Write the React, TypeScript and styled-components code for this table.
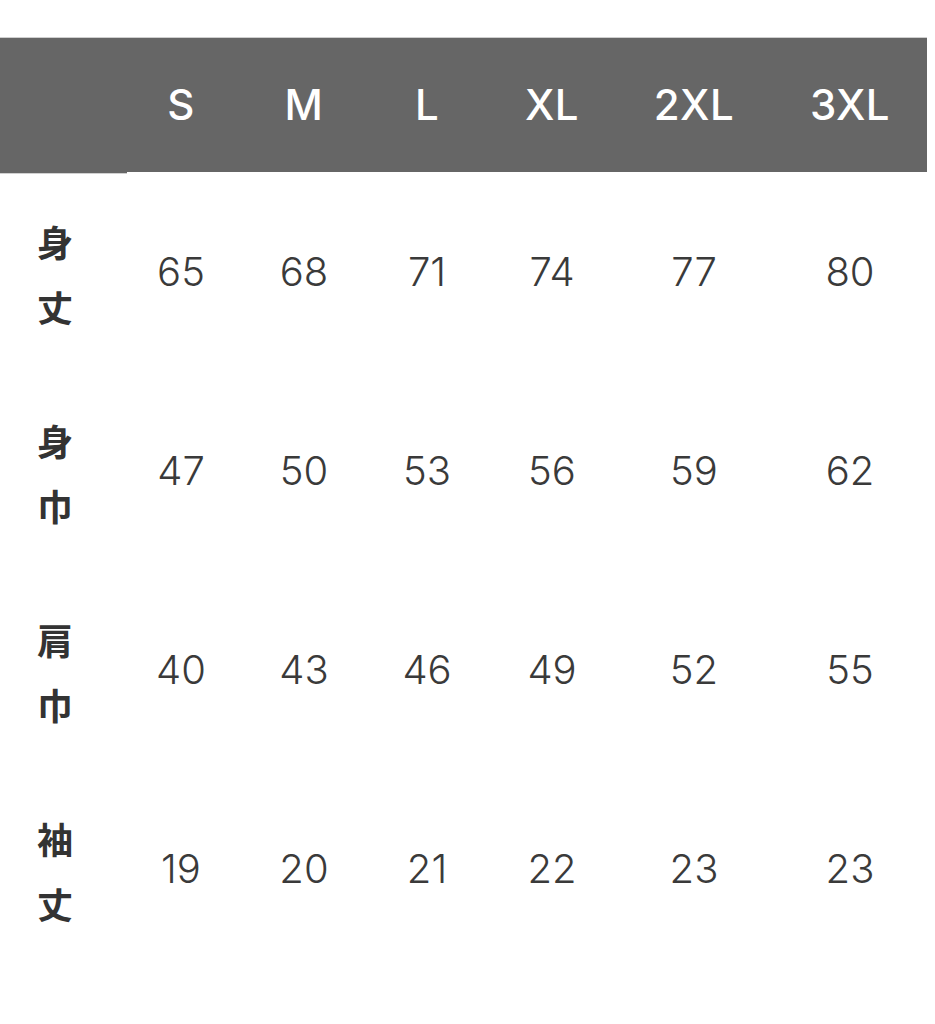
import React from "react";
import styled, { createGlobalStyle } from "styled-components";

const Global = createGlobalStyle`
  html, body { margin: 0; padding: 0; background: #fff; }
  *, *::before, *::after { box-sizing: border-box; }
  body { font-family: Inter, "Noto Sans CJK JP", sans-serif; }
`;

const Page = styled.div`
  padding-top: 37px;
  width: 935px;
`;

const Table = styled.div`
  display: grid;
  grid-template-columns: 127px 108px 138px 108px 142px 142px 162px;
  width: 927px;
`;

const HeadCell = styled.div<{ $stub?: boolean; $shift?: number }>`
  height: ${(p) => (p.$stub ? 137 : 135)}px;
  background: #666666;
  border-top: 1px solid #cfcfcf;
  ${(p) => (p.$stub ? "border-bottom: 1px solid #d0d0d0;" : "")}
  display: flex;
  align-items: center;
  justify-content: center;
  padding-left: ${(p) => p.$shift ?? 0}px;
  padding-bottom: 2px;
  color: #ffffff;
  font-family: Inter, sans-serif;
  font-weight: 500;
  font-size: 42px;
  letter-spacing: 0.5px;
  margin-bottom: ${(p) => (p.$stub ? -2 : 0)}px;
  &:last-child {
    border-right: 1px solid #cfcfcf;
  }
`;

const LabelCell = styled.div`
  height: 199px;
  display: flex;
  flex-direction: column;
  align-items: center;
  justify-content: center;
  padding-right: 17px;
  padding-top: 5px;
  color: #333333;
  font-family: "Noto Sans CJK JP", sans-serif;
  font-weight: 700;
  font-size: 36px;
  line-height: 65px;
`;

const ValueCell = styled.div<{ $shift?: number }>`
  height: 199px;
  display: flex;
  align-items: center;
  justify-content: center;
  padding-left: ${(p) => p.$shift ?? 0}px;
  color: #3a3a3a;
  font-family: Inter, sans-serif;
  font-weight: 300;
  font-size: 40px;
`;

const sizes = ["S", "M", "L", "XL", "2XL", "3XL"];
const rows: { label: [string, string]; values: number[] }[] = [
  { label: ["身", "丈"], values: [65, 68, 71, 74, 77, 80] },
  { label: ["身", "巾"], values: [47, 50, 53, 56, 59, 62] },
  { label: ["肩", "巾"], values: [40, 43, 46, 49, 52, 55] },
  { label: ["袖", "丈"], values: [19, 20, 21, 22, 23, 23] },
];

const shift = (i: number) => (i === 5 ? 8 : 0);

export default function App() {
  return (
    <Page>
      <Global />
      <Table>
        <HeadCell $stub />
        {sizes.map((s, i) => (
          <HeadCell key={s} $shift={shift(i)}>
            {s}
          </HeadCell>
        ))}
        {rows.map((r, ri) => (
          <React.Fragment key={ri}>
            <LabelCell>
              <span>{r.label[0]}</span>
              <span>{r.label[1]}</span>
            </LabelCell>
            {r.values.map((v, i) => (
              <ValueCell key={i} $shift={shift(i)}>
                {v}
              </ValueCell>
            ))}
          </React.Fragment>
        ))}
      </Table>
    </Page>
  );
}
